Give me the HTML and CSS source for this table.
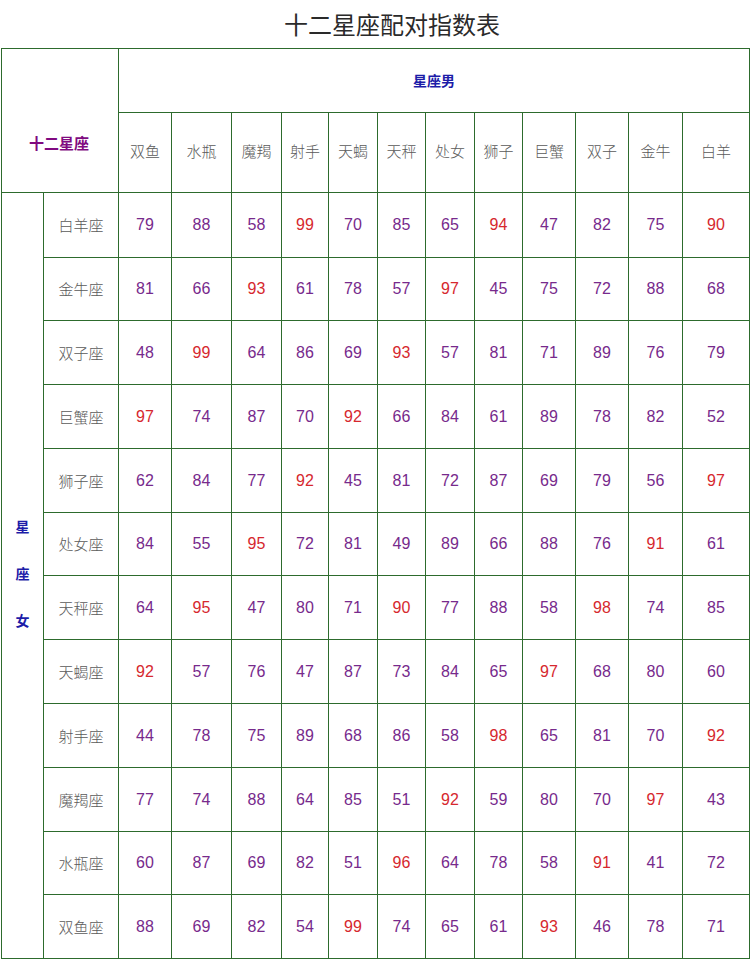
FILE: index.html
```html
<!DOCTYPE html>
<html lang="zh-CN">
<head>
<meta charset="utf-8">
<title>十二星座配对指数表</title>
<link rel="stylesheet" href="styles.css">
</head>
<body>
<h1 class="title">十二星座配对指数表</h1>
<div class="wrap">
<div class="grid">
  <div class="cell corner">十二星座</div>
  <div class="cell male">星座男</div>
  <div class="cell ch">双鱼</div><div class="cell ch">水瓶</div><div class="cell ch">魔羯</div><div class="cell ch">射手</div><div class="cell ch">天蝎</div><div class="cell ch">天秤</div><div class="cell ch">处女</div><div class="cell ch">狮子</div><div class="cell ch">巨蟹</div><div class="cell ch">双子</div><div class="cell ch">金牛</div><div class="cell ch">白羊</div>
  <div class="cell female"><span>星</span><span>座</span><span>女</span></div>

  <div class="cell rn">白羊座</div><div class="cell v">79</div><div class="cell v">88</div><div class="cell v">58</div><div class="cell v hi">99</div><div class="cell v">70</div><div class="cell v">85</div><div class="cell v">65</div><div class="cell v hi">94</div><div class="cell v">47</div><div class="cell v">82</div><div class="cell v">75</div><div class="cell v hi">90</div>
  <div class="cell rn">金牛座</div><div class="cell v">81</div><div class="cell v">66</div><div class="cell v hi">93</div><div class="cell v">61</div><div class="cell v">78</div><div class="cell v">57</div><div class="cell v hi">97</div><div class="cell v">45</div><div class="cell v">75</div><div class="cell v">72</div><div class="cell v">88</div><div class="cell v">68</div>
  <div class="cell rn">双子座</div><div class="cell v">48</div><div class="cell v hi">99</div><div class="cell v">64</div><div class="cell v">86</div><div class="cell v">69</div><div class="cell v hi">93</div><div class="cell v">57</div><div class="cell v">81</div><div class="cell v">71</div><div class="cell v">89</div><div class="cell v">76</div><div class="cell v">79</div>
  <div class="cell rn">巨蟹座</div><div class="cell v hi">97</div><div class="cell v">74</div><div class="cell v">87</div><div class="cell v">70</div><div class="cell v hi">92</div><div class="cell v">66</div><div class="cell v">84</div><div class="cell v">61</div><div class="cell v">89</div><div class="cell v">78</div><div class="cell v">82</div><div class="cell v">52</div>
  <div class="cell rn">狮子座</div><div class="cell v">62</div><div class="cell v">84</div><div class="cell v">77</div><div class="cell v hi">92</div><div class="cell v">45</div><div class="cell v">81</div><div class="cell v">72</div><div class="cell v">87</div><div class="cell v">69</div><div class="cell v">79</div><div class="cell v">56</div><div class="cell v hi">97</div>
  <div class="cell rn">处女座</div><div class="cell v">84</div><div class="cell v">55</div><div class="cell v hi">95</div><div class="cell v">72</div><div class="cell v">81</div><div class="cell v">49</div><div class="cell v">89</div><div class="cell v">66</div><div class="cell v">88</div><div class="cell v">76</div><div class="cell v hi">91</div><div class="cell v">61</div>
  <div class="cell rn">天秤座</div><div class="cell v">64</div><div class="cell v hi">95</div><div class="cell v">47</div><div class="cell v">80</div><div class="cell v">71</div><div class="cell v hi">90</div><div class="cell v">77</div><div class="cell v">88</div><div class="cell v">58</div><div class="cell v hi">98</div><div class="cell v">74</div><div class="cell v">85</div>
  <div class="cell rn">天蝎座</div><div class="cell v hi">92</div><div class="cell v">57</div><div class="cell v">76</div><div class="cell v">47</div><div class="cell v">87</div><div class="cell v">73</div><div class="cell v">84</div><div class="cell v">65</div><div class="cell v hi">97</div><div class="cell v">68</div><div class="cell v">80</div><div class="cell v">60</div>
  <div class="cell rn">射手座</div><div class="cell v">44</div><div class="cell v">78</div><div class="cell v">75</div><div class="cell v">89</div><div class="cell v">68</div><div class="cell v">86</div><div class="cell v">58</div><div class="cell v hi">98</div><div class="cell v">65</div><div class="cell v">81</div><div class="cell v">70</div><div class="cell v hi">92</div>
  <div class="cell rn">魔羯座</div><div class="cell v">77</div><div class="cell v">74</div><div class="cell v">88</div><div class="cell v">64</div><div class="cell v">85</div><div class="cell v">51</div><div class="cell v hi">92</div><div class="cell v">59</div><div class="cell v">80</div><div class="cell v">70</div><div class="cell v hi">97</div><div class="cell v">43</div>
  <div class="cell rn">水瓶座</div><div class="cell v">60</div><div class="cell v">87</div><div class="cell v">69</div><div class="cell v">82</div><div class="cell v">51</div><div class="cell v hi">96</div><div class="cell v">64</div><div class="cell v">78</div><div class="cell v">58</div><div class="cell v hi">91</div><div class="cell v">41</div><div class="cell v">72</div>
  <div class="cell rn">双鱼座</div><div class="cell v">88</div><div class="cell v">69</div><div class="cell v">82</div><div class="cell v">54</div><div class="cell v hi">99</div><div class="cell v">74</div><div class="cell v">65</div><div class="cell v">61</div><div class="cell v hi">93</div><div class="cell v">46</div><div class="cell v">78</div><div class="cell v">71</div>
</div>
</div>
</body>
</html>
```

FILE: styles.css
```css
html, body {
  margin: 0;
  padding: 0;
  background: #ffffff;
}

body {
  font-family: "Noto Sans CJK SC", "Liberation Sans", sans-serif;
}

.title {
  margin: 0;
  height: 48px;
  line-height: 48px;
  padding-left: 33px;
  text-align: center;
  font-size: 24px;
  font-weight: 400;
  color: #2a2a2a;
}

.wrap {
  padding-left: 1px;
}

.grid {
  display: grid;
  width: max-content;
  padding: 1px;
  gap: 1px;
  background: #2d6b2d;
  grid-template-columns: 41px 74px 52px 59px 49px 46px 48px 47px 48px 47px 52px 52px 53px 66px;
  grid-template-rows: 63px 79px 64px 62px 63px 63px 63px 62px 63px 63px 63px 63px 62px 63px;
}

.cell {
  background: #ffffff;
  display: flex;
  align-items: center;
  justify-content: center;
}

.corner {
  grid-column: 1 / 3;
  grid-row: 1 / 3;
  color: #800a80;
  font-weight: 700;
  font-size: 15px;
  padding-right: 2px;
  padding-top: 44px;
}

.male {
  grid-column: 3 / 15;
  grid-row: 1;
  color: #1c1ca8;
  font-weight: 700;
  font-size: 14px;
  padding-bottom: 2px;
}

.ch {
  color: #5a5a5a;
  font-size: 15px;
  font-weight: 300;
  padding-bottom: 4px;
}

.female {
  grid-column: 1;
  grid-row: 3 / 15;
  flex-direction: column;
  color: #1c1ca8;
  font-weight: 700;
  font-size: 14px;
  padding-bottom: 4px;
}

.female span {
  line-height: 47px;
}

.rn {
  color: #5a5a5a;
  font-size: 15px;
  font-weight: 300;
  padding-bottom: 1px;
}

.v {
  font-family: "Liberation Sans", Arial, sans-serif;
  font-size: 16px;
  color: #772a8c;
}

.v.hi {
  color: #d6282e;
}
```
